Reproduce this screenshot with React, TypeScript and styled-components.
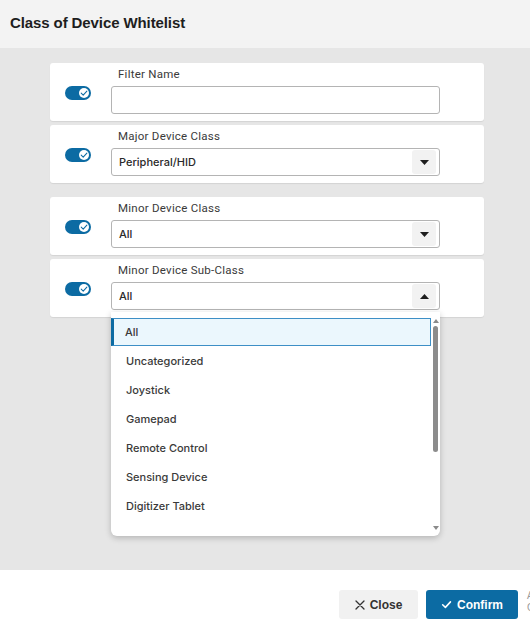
import React from "react";
import styled, { createGlobalStyle } from "styled-components";

const Global = createGlobalStyle`
  html, body { margin: 0; padding: 0; }
  body { width: 530px; height: 636px; overflow: hidden; background: #fff; font-family: Inter, "Noto Sans", Arial, sans-serif; }
  * { box-sizing: border-box; }
`;

const Page = styled.div`
  width: 530px;
  height: 636px;
  display: flex;
  flex-direction: column;
  overflow: hidden;
`;

const Header = styled.div`
  height: 48px;
  flex: none;
  background: #f3f3f3;
  display: flex;
  align-items: center;
  padding-left: 10px;
  padding-bottom: 3px;
`;

const Title = styled.h1`
  margin: 0;
  font-family: "Liberation Sans", Arial, sans-serif;
  font-weight: 700;
  font-size: 15px;
  color: #1e1e1e;
  letter-spacing: -0.1px;
`;

const Body = styled.div`
  flex: none;
  height: 522px;
  background: #e6e6e6;
  padding: 15px 0 0 50px;
  display: flex;
  flex-direction: column;
`;

const Card = styled.div<{ $mt?: number }>`
  width: 434px;
  height: 58px;
  margin-top: ${(p) => p.$mt ?? 0}px;
  background: #fff;
  border-radius: 3px;
  box-shadow: 0 1px 1px rgba(0, 0, 0, 0.08);
  display: flex;
  align-items: center;
  padding: 0 44px 0 15px;
  gap: 20px;
  position: relative;
`;

const Toggle = styled.div`
  width: 26px;
  height: 14px;
  border-radius: 7px;
  background: #0c6ba3;
  position: relative;
  flex: none;
  margin-top: 1px;
`;

const Knob = styled.div`
  position: absolute;
  right: 2px;
  top: 2px;
  width: 10px;
  height: 10px;
  border-radius: 50%;
  background: #fff;
  display: flex;
  align-items: center;
  justify-content: center;
`;

const Field = styled.div`
  flex: 1;
  display: flex;
  flex-direction: column;
  position: relative;
  margin-top: -1px;
`;

const Label = styled.div`
  font-size: 11.5px;
  color: #3a3a3a;
  height: 17px;
  line-height: 10px;
  padding-left: 7px;
  letter-spacing: 0.25px;
  font-family: Roboto, Inter, sans-serif;
`;

const Input = styled.div`
  height: 28px;
  border: 1px solid #b4b4b4;
  border-radius: 3px;
  background: #fff;
  display: flex;
  align-items: center;
  padding-left: 7px;
  padding-right: 3px;
  font-size: 11px;
  font-weight: 500;
  color: #2a2a2a;
`;

const Value = styled.span`
  flex: 1;
`;

const Caret = styled.div`
  width: 24px;
  height: 24px;
  background: #f2f2f2;
  border-radius: 3px;
  display: flex;
  align-items: center;
  justify-content: center;
`;

const List = styled.div`
  position: absolute;
  top: 47px;
  left: 0;
  right: 0;
  height: 224px;
  background: #fff;
  border-radius: 0 0 6px 6px;
  box-shadow: 0 2px 6px rgba(0, 0, 0, 0.22);
  padding: 6px 9px 0 0;
  overflow: hidden;
  z-index: 5;
`;

const Item = styled.div<{ $sel?: boolean }>`
  height: ${(p) => (p.$sel ? 28 : 29)}px;
  margin-bottom: ${(p) => (p.$sel ? 1 : 0)}px;
  display: flex;
  align-items: center;
  padding-left: ${(p) => (p.$sel ? 11 : 15)}px;
  padding-bottom: 1px;
  font-size: 11px;
  font-weight: 500;
  color: #3a3a3a;
  background: ${(p) => (p.$sel ? "#ebf7fd" : "transparent")};
  border: ${(p) => (p.$sel ? "1px solid #3d8fc6" : "none")};
  border-left: ${(p) => (p.$sel ? "3px solid #0c6ba3" : "none")};
`;

const ScrollTrack = styled.div`
  position: absolute;
  right: 0;
  top: 7px;
  bottom: 6px;
  width: 9px;
  display: flex;
  flex-direction: column;
  align-items: center;
`;

const Thumb = styled.div`
  width: 5px;
  height: 126px;
  background: #8c8c8c;
  border-radius: 3px;
  margin-top: 3px;
`;

const Spacer = styled.div`
  flex: 1;
`;

const Footer = styled.div`
  flex: 1;
  background: #fff;
  display: flex;
  justify-content: flex-end;
  align-items: flex-start;
  padding: 20px 12px 0 0;
  gap: 8px;
  position: relative;
`;

const Button = styled.button<{ $primary?: boolean }>`
  height: 29px;
  width: ${(p) => (p.$primary ? 92 : 79)}px;
  border: none;
  border-radius: 3px;
  background: ${(p) => (p.$primary ? "#0c6ba3" : "#f1f1f1")};
  color: ${(p) => (p.$primary ? "#fff" : "#333")};
  font-family: "Liberation Sans", Arial, sans-serif;
  font-weight: 700;
  font-size: 12px;
  display: flex;
  align-items: center;
  justify-content: center;
  gap: 5px;
  padding: 0;
`;

const EdgeText = styled.div`
  position: absolute;
  left: 527px;
  top: 20px;
  font-size: 10px;
  line-height: 12px;
  color: #9a9a9a;
  font-family: "Liberation Sans", Arial, sans-serif;
`;

const Check = ({ size = 8, color = "#0c6ba3", w = 1.4 }: { size?: number; color?: string; w?: number }) => (
  <svg width={size} height={size} viewBox="0 0 10 10">
    <path d="M1.5 5.2 L4 7.6 L8.6 2.6" fill="none" stroke={color} strokeWidth={w} strokeLinecap="round" strokeLinejoin="round" />
  </svg>
);

const Tri = ({ up }: { up?: boolean }) => (
  <svg width="9" height="5" viewBox="0 0 9 5">
    <path d={up ? "M0 5 L4.5 0 L9 5 Z" : "M0 0 L9 0 L4.5 5 Z"} fill="#1e1e1e" />
  </svg>
);

const SmallTri = ({ up }: { up?: boolean }) => (
  <svg width="6" height="4" viewBox="0 0 6 4">
    <path d={up ? "M0 4 L3 0 L6 4 Z" : "M0 0 L6 0 L3 4 Z"} fill="#8a8a8a" />
  </svg>
);

const Switch = () => (
  <Toggle>
    <Knob>
      <Check size={8} w={1.3} />
    </Knob>
  </Toggle>
);

const items = [
  "All",
  "Uncategorized",
  "Joystick",
  "Gamepad",
  "Remote Control",
  "Sensing Device",
  "Digitizer Tablet",
];

export default function App() {
  return (
    <>
      <Global />
      <Page>
        <Header>
          <Title>Class of Device Whitelist</Title>
        </Header>
        <Body>
          <Card>
            <Switch />
            <Field>
              <Label>Filter Name</Label>
              <Input />
            </Field>
          </Card>
          <Card $mt={4}>
            <Switch />
            <Field>
              <Label>Major Device Class</Label>
              <Input>
                <Value>Peripheral/HID</Value>
                <Caret>
                  <Tri />
                </Caret>
              </Input>
            </Field>
          </Card>
          <Card $mt={14}>
            <Switch />
            <Field>
              <Label>Minor Device Class</Label>
              <Input>
                <Value>All</Value>
                <Caret>
                  <Tri />
                </Caret>
              </Input>
            </Field>
          </Card>
          <Card $mt={4}>
            <Switch />
            <Field>
              <Label>Minor Device Sub-Class</Label>
              <Input>
                <Value>All</Value>
                <Caret>
                  <Tri up />
                </Caret>
              </Input>
              <List>
                {items.map((t, i) => (
                  <Item key={t} $sel={i === 0}>
                    {t}
                  </Item>
                ))}
                <ScrollTrack>
                  <SmallTri up />
                  <Thumb />
                  <Spacer />
                  <SmallTri />
                </ScrollTrack>
              </List>
            </Field>
          </Card>
        </Body>
        <Footer>
          <Button>
            <svg width="10" height="10" viewBox="0 0 10 10">
              <path d="M1 1 L9 9 M9 1 L1 9" stroke="#333" strokeWidth="1.3" strokeLinecap="round" />
            </svg>
            Close
          </Button>
          <Button $primary>
            <Check size={11} color="#fff" w={1.4} />
            Confirm
          </Button>
          <EdgeText>
            A
            <br />C
          </EdgeText>
        </Footer>
      </Page>
    </>
  );
}
